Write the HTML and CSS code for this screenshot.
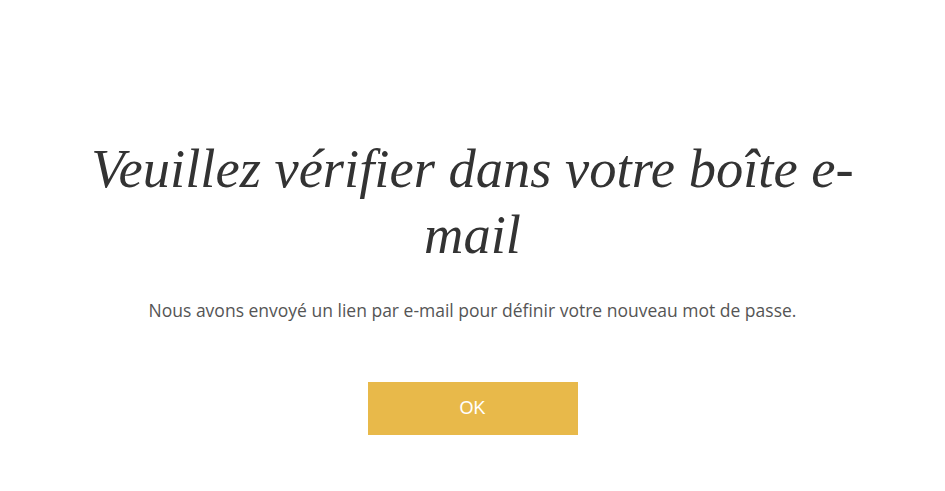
FILE: index.html
```html
<!DOCTYPE html>
<html lang="fr">
<head>
  <meta charset="UTF-8">
  <title>Vérifiez votre boîte e-mail</title>
  <link rel="stylesheet" href="styles.css">
</head>
<body>

<div class="notice">
  <h1 class="notice-title">Veuillez vérifier dans votre boîte e-mail</h1>
  <p class="notice-text">Nous avons envoyé un lien par e-mail pour définir votre nouveau mot de passe.</p>
  <a href="#" class="notice-btn">OK</a>
</div>

</body>
</html>
```

FILE: styles.css
```css
* {
  margin: 0;
  padding: 0;
}

body {
  background-color: #fff;
}

.notice {
  display: flex;
  flex-direction: column;
  align-items: center;
  padding-top: 136px;
}

.notice-title {
  width: 790px;
  font-family: "Liberation Serif", serif;
  font-style: italic;
  font-weight: normal;
  font-size: 54.5px;
  line-height: 66px;
  color: #333;
  text-align: center;
}

.notice-text {
  margin-top: 30px;
  font-family: "Open Sans", sans-serif;
  font-size: 17.5px;
  line-height: 24px;
  color: #555;
  text-align: center;
}

.notice-btn {
  margin-top: 60px;
  width: 210px;
  height: 53px;
  line-height: 53px;
  background-color: #e8b94a;
  color: #fff;
  font-family: "Liberation Sans", Arial, sans-serif;
  font-size: 18px;
  text-align: center;
  text-decoration: none;
}
```
